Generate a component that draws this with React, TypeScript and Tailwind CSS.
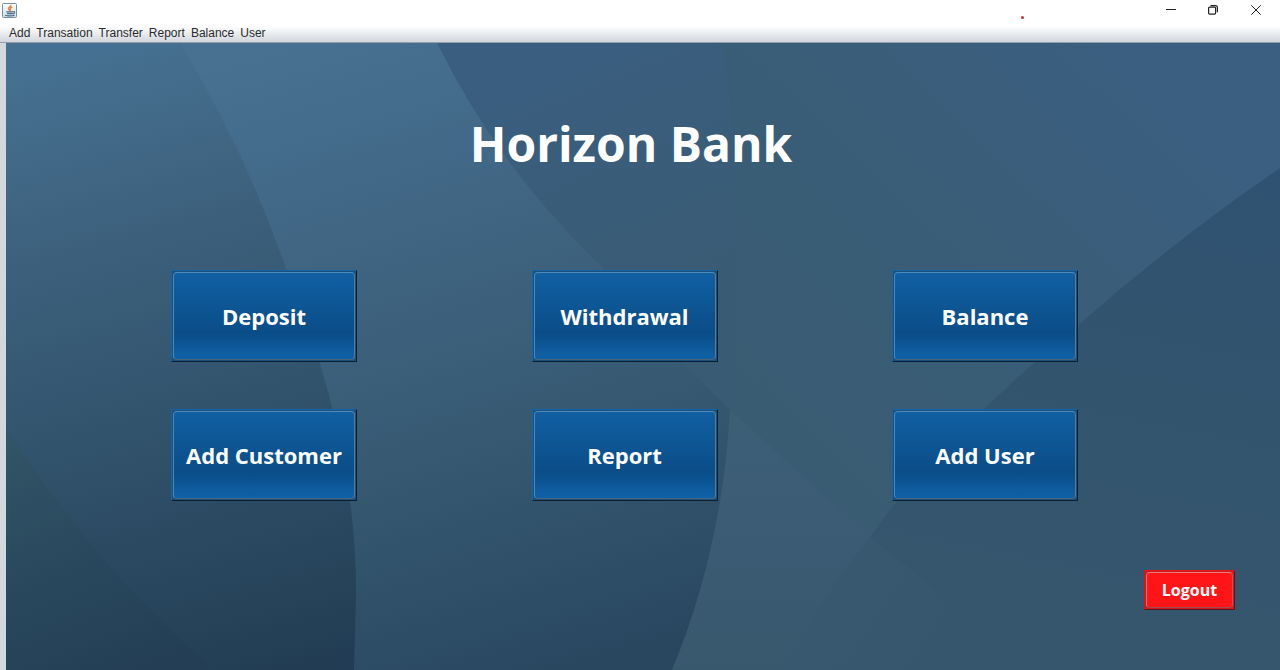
const menus = ["Add", "Transation", "Transfer", "Report", "Balance", "User"];
const actions = ["Deposit", "Withdrawal", "Balance", "Add Customer", "Report", "Add User"];

function JavaIcon() {
  return (
    <svg width="16" height="16" viewBox="0 0 16 16" fill="none" aria-hidden="true">
      <defs>
        <linearGradient id="frame" x1="0" y1="0" x2="0" y2="1">
          <stop offset="0" stopColor="#ffffff" />
          <stop offset="1" stopColor="#cfd9e2" />
        </linearGradient>
      </defs>
      <rect x="0.5" y="0.5" width="14" height="14" rx="1" fill="url(#frame)" stroke="#7590a6" />
      <path d="M8.700 1.800c.9 1.400-2.700 2.500-2.200 4.200.2.800 1.300 1.100 1.400 2M10.300 4c-1.300.5-2.500 1.200-2 2.200.4.700.5 1.100-.1 1.700" stroke="#e5874a" strokeWidth="1.500" />
      <path d="M4.300 8.900h6.700M5 10.600h5.500M11.200 8.600c2.200-.3 1.600 2.100-.6 2.200" stroke="#4c6f8b" strokeWidth="1.200" />
      <path d="M3.200 12.300c2 .8 7.300.8 9.300-.1" stroke="#3f6584" strokeWidth="1.200" />
    </svg>
  );
}

function TitleBar() {
  return (
    <header className="relative flex h-[22px] items-start justify-between bg-white pl-0.5">
      <div className="pt-[3px]">
        <JavaIcon />
      </div>
      <span className="absolute top-4 right-[256px] size-[3px] rounded-full bg-[#d42a2a]" />
      <div className="flex pr-0.5 text-[#222]">
        <button type="button" aria-label="Minimize" className="flex h-5 w-[42px] items-center justify-center">
          <svg width="10" height="10" viewBox="0 0 10 10" stroke="currentColor" fill="none">
            <path d="M0 4.500h10" />
          </svg>
        </button>
        <button type="button" aria-label="Restore" className="flex h-5 w-[42px] items-center justify-center">
          <svg width="10" height="10" viewBox="0 0 10 10" stroke="currentColor" fill="none" strokeWidth="1.200">
            <rect x="0.600" y="2.100" width="7" height="7" rx="1" />
            <path d="M2.500 .600h5a1.900 1.900 0 0 1 1.900 1.900v4.800" />
          </svg>
        </button>
        <button type="button" aria-label="Close" className="flex h-5 w-[44px] items-center justify-center">
          <svg width="10" height="10" viewBox="0 0 10 10" stroke="currentColor" fill="none">
            <path d="M.300.300l9.400 9.400M9.700.300L.300 9.700" />
          </svg>
        </button>
      </div>
    </header>
  );
}

function MenuBar() {
  return (
    <nav className="flex h-[21px] items-center gap-1.5 border-b border-[#929fac] bg-linear-to-b from-white from-20% to-[#d2d6dd] pt-0.5 pl-[9px] text-xs text-[#2b2b2b]">
      {menus.map((m) => (
        <button key={m} type="button">
          {m}
        </button>
      ))}
    </nav>
  );
}

function Backdrop() {
  return (
    <svg
      className="absolute inset-0 size-full"
      viewBox="6 43 1274 627"
      preserveAspectRatio="none"
      aria-hidden="true"
    >
      <defs>
        <linearGradient id="sky" gradientUnits="userSpaceOnUse" x1="1200" y1="60" x2="800" y2="480">
          <stop offset="0" stopColor="#3a5f81" />
          <stop offset="0.500" stopColor="#3a5d78" />
          <stop offset="1" stopColor="#395c72" />
        </linearGradient>
        <linearGradient id="skyLeft" gradientUnits="userSpaceOnUse" x1="500" y1="60" x2="620" y2="350">
          <stop offset="0" stopColor="#3a5e80" />
          <stop offset="1" stopColor="#395b73" />
        </linearGradient>
        <linearGradient id="right" gradientUnits="userSpaceOnUse" x1="1260" y1="180" x2="1160" y2="670">
          <stop offset="0" stopColor="#2f5272" />
          <stop offset="0.400" stopColor="#32546e" />
          <stop offset="1" stopColor="#35566c" />
        </linearGradient>
        <linearGradient id="floor" gradientUnits="userSpaceOnUse" x1="760" y1="430" x2="760" y2="670">
          <stop offset="0" stopColor="#3c5f76" />
          <stop offset="0.450" stopColor="#3b5b74" />
          <stop offset="1" stopColor="#38586d" />
        </linearGradient>
        <linearGradient id="floorFade" gradientUnits="userSpaceOnUse" x1="860" y1="560" x2="980" y2="640">
          <stop offset="0" stopColor="#38586f" />
          <stop offset="1" stopColor="#35566c" />
        </linearGradient>
        <linearGradient id="band" gradientUnits="userSpaceOnUse" x1="300" y1="43" x2="490" y2="690">
          <stop offset="0" stopColor="#477091" />
          <stop offset="0.200" stopColor="#426988" />
          <stop offset="0.550" stopColor="#3a5d77" />
          <stop offset="1" stopColor="#294860" />
        </linearGradient>
        <linearGradient id="left" gradientUnits="userSpaceOnUse" x1="50" y1="60" x2="220" y2="690">
          <stop offset="0" stopColor="#467091" />
          <stop offset="0.300" stopColor="#3c607c" />
          <stop offset="0.600" stopColor="#31526b" />
          <stop offset="1" stopColor="#223d53" />
        </linearGradient>
        <linearGradient id="corner" gradientUnits="userSpaceOnUse" x1="10" y1="430" x2="110" y2="680">
          <stop offset="0" stopColor="#325567" />
          <stop offset="0.500" stopColor="#2a495e" />
          <stop offset="1" stopColor="#243f55" />
        </linearGradient>
      </defs>
      <rect x="6" y="43" width="1274" height="627" fill="url(#sky)" />
      <path d="M400 43H722Q750 220 730 410L600 400Z" fill="url(#skyLeft)" />
      <path d="M1280 168Q1175 240 1078 325Q975 410 893 506L870 537Q835 580 808 625L780 670H1280Z" fill="url(#right)" />
      <path d="M730 410L870 537Q835 580 808 625L780 670H660Z" fill="url(#floor)" />
      <path d="M870 537L980 625L1040 670H780L808 625Q835 580 870 537Z" fill="url(#floorFade)" />
      <path d="M170 43H437Q500 170 600 265L685 365L730 410Q722 550 672 670H300Z" fill="url(#band)" />
      <path d="M6 43H180Q245 150 287 271Q358 445 356 600L354 670H6Z" fill="url(#left)" />
      <path d="M6 427Q90 560 213 670H6Z" fill="url(#corner)" />
    </svg>
  );
}

function ActionButton({ label }: { label: string }) {
  return (
    <button
      type="button"
      className="h-[92px] border border-t-[#1465a8] border-r-[#0c1f30] border-b-[#0c1f30] border-l-[#1465a8] bg-[#1a507e] p-px"
    >
      <span className="flex size-full items-center justify-center rounded-sm border border-t-[#4f8abb] border-r-[#62798c] border-b-[#4d6478] border-l-[#4f88b8] bg-[#0d548f] bg-linear-to-b from-[#1160a2] via-[#0a4d88] via-70% to-[#1063aa] bg-origin-border text-[22px] leading-[30px] font-bold whitespace-nowrap text-white">
        {label}
      </span>
    </button>
  );
}

export default function App() {
  return (
    <div className="flex min-h-screen flex-col bg-white font-['Liberation_Sans',Arial,sans-serif]">
      <TitleBar />
      <MenuBar />
      <div className="flex grow border-l-[6px] border-[#d3d8df]">
        <main className="relative grow overflow-hidden font-['Open_Sans','Noto_Sans',sans-serif]">
          <Backdrop />
          <div className="relative flex flex-col">
            <h1 className="pt-[66px] pr-6 text-center text-5xl leading-[70px] font-bold text-white">Horizon Bank</h1>
            <div className="mt-[91px] grid grid-cols-[186px_186px_186px] justify-between gap-y-[47px] pr-[202px] pl-[165px]">
              {actions.map((a) => (
                <ActionButton key={a} label={a} />
              ))}
            </div>
            <div className="mt-[69px] flex justify-end pr-[45px] pb-[60px]">
              <button
                type="button"
                className="h-10 w-[91px] border border-t-[#ee1111] border-r-[#5c1420] border-b-[#5c1420] border-l-[#e01010] bg-[#d01a20] p-px"
              >
                <span className="flex size-full items-center justify-center rounded-sm border border-t-[#e08080] border-r-[#96646a] border-b-[#a04a50] border-l-[#c07878] bg-[#ff1517] text-base leading-5 font-bold text-white">
                  Logout
                </span>
              </button>
            </div>
          </div>
        </main>
      </div>
    </div>
  );
}
